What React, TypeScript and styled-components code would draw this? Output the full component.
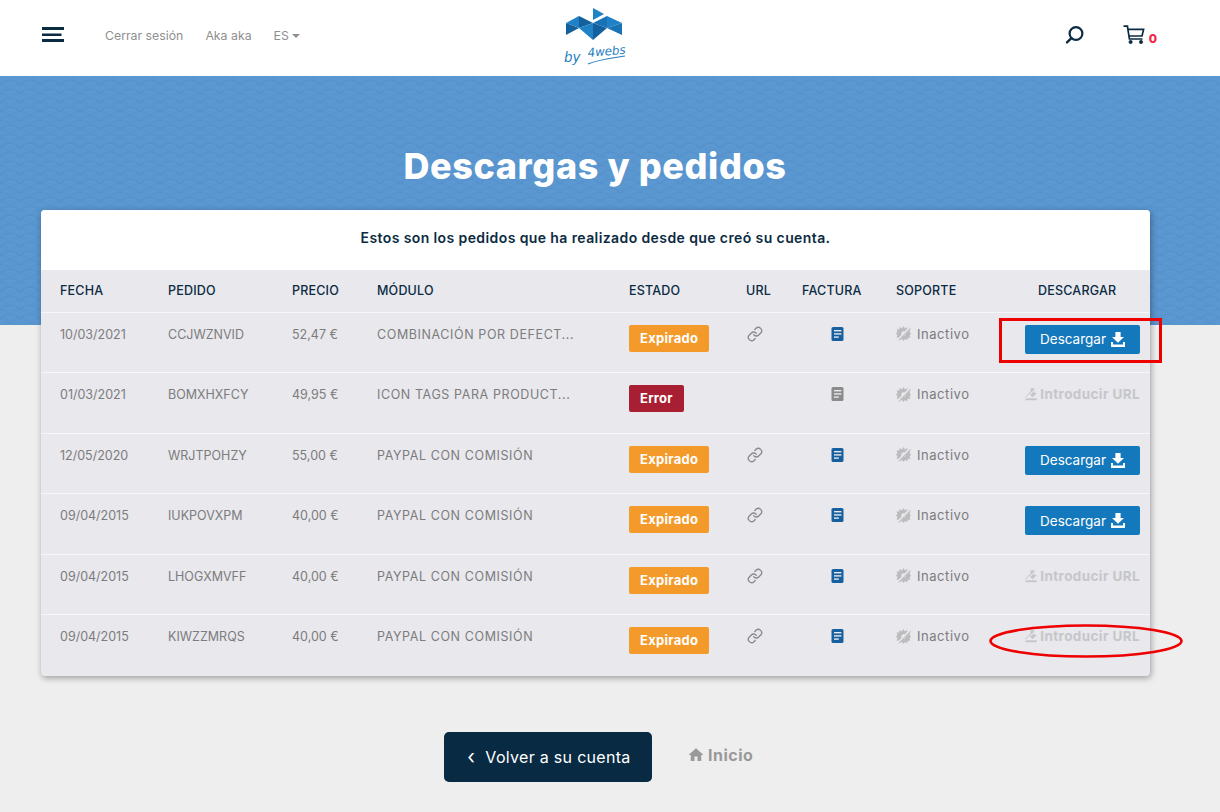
import React from 'react'
import styled, { createGlobalStyle } from 'styled-components'
import { Link as LinkIcon } from 'lucide-react'
import { MdHome } from 'react-icons/md'

const FONT = `Inter, "Open Sans", "Liberation Sans", sans-serif`

const GlobalStyle = createGlobalStyle`
  html, body {
    margin: 0;
    padding: 0;
    background: #eeeeee;
    font-family: ${FONT};
    overflow: hidden;
  }
  * {
    box-sizing: border-box;
  }
`

type Order = {
  date: string
  code: string
  price: string
  module: string
  status: 'Expirado' | 'Error'
  link: boolean
  action: 'download' | 'url'
}

const ORDERS: Order[] = [
  { date: '10/03/2021', code: 'CCJWZNVID', price: '52,47 €', module: 'COMBINACIÓN POR DEFECT...', status: 'Expirado', link: true, action: 'download' },
  { date: '01/03/2021', code: 'BOMXHXFCY', price: '49,95 €', module: 'ICON TAGS PARA PRODUCT...', status: 'Error', link: false, action: 'url' },
  { date: '12/05/2020', code: 'WRJTPOHZY', price: '55,00 €', module: 'PAYPAL CON COMISIÓN', status: 'Expirado', link: true, action: 'download' },
  { date: '09/04/2015', code: 'IUKPOVXPM', price: '40,00 €', module: 'PAYPAL CON COMISIÓN', status: 'Expirado', link: true, action: 'download' },
  { date: '09/04/2015', code: 'LHOGXMVFF', price: '40,00 €', module: 'PAYPAL CON COMISIÓN', status: 'Expirado', link: true, action: 'url' },
  { date: '09/04/2015', code: 'KIWZZMRQS', price: '40,00 €', module: 'PAYPAL CON COMISIÓN', status: 'Expirado', link: true, action: 'url' }
]

const COLUMNS = '108px 124px 85px 252px 117px 56px 94px 104px 1fr'

function Logo() {
  const light = '#1f82c7'
  const mid = '#1873b5'
  const dark = '#14609c'
  return (
    <svg width="66" height="68" viewBox="0 0 66 68">
      <polygon points="30,2 41,8 30,14" fill={light} />
      <polygon points="3,17 16,10 16,22" fill={light} />
      <polygon points="16,10 30,17 16,22" fill={dark} />
      <polygon points="3,17 3,29 16,22" fill={dark} />
      <polygon points="16,22 30,17 30,34" fill={light} />
      <polygon points="30,17 44,22 30,34" fill={dark} />
      <polygon points="30,17 44,10 44,22" fill={mid} />
      <polygon points="44,10 59,17 44,22" fill={light} />
      <polygon points="59,17 59,29 44,22" fill={mid} />
      <text x="1" y="56" fontFamily="'DejaVu Sans', sans-serif" fontStyle="italic" fontSize="13.5" fill="#2680bf">
        by
      </text>
      <text x="25" y="51" fontFamily="'DejaVu Sans', sans-serif" fontStyle="italic" fontSize="12" textLength="38" lengthAdjust="spacingAndGlyphs" fill="#2680bf" transform="rotate(-5 25 51)">
        4webs
      </text>
      <path d="M25 58 C37 53 50 52 62 50" stroke="#2680bf" strokeWidth="1.1" fill="none" />
    </svg>
  )
}

function MenuIcon() {
  return (
    <svg width="23" height="16" viewBox="0 0 23 16">
      <rect x="0" y="0" width="22" height="3" fill="#0b2b42" />
      <rect x="0" y="6.5" width="19.5" height="2.5" fill="#0b2b42" />
      <rect x="0" y="12" width="22" height="3" fill="#0b2b42" />
    </svg>
  )
}

function SearchIcon() {
  return (
    <svg width="20" height="20" viewBox="0 0 20 20" fill="none" stroke="#0b2b42">
      <circle cx="11" cy="8.5" r="6.4" strokeWidth="2.2" />
      <line x1="6.4" y1="13.2" x2="2" y2="17.4" strokeWidth="2.4" strokeLinecap="round" />
    </svg>
  )
}

function CartIcon() {
  return (
    <svg width="22" height="20" viewBox="0 0 22 20" fill="none" stroke="#0b2b42" strokeWidth="1.7">
      <path d="M0.5 1.2 H4.4 L6.4 14 H19.5" />
      <path d="M5 4.4 H20.6 L19 11 H6" />
      <circle cx="7.6" cy="17" r="1.7" fill="#0b2b42" strokeWidth="0.6" />
      <circle cx="18" cy="17" r="1.7" fill="#0b2b42" strokeWidth="0.6" />
    </svg>
  )
}

function InvoiceIcon({ active }: { active: boolean }) {
  const fill = active ? '#17609f' : '#8b8b8b'
  return (
    <svg width="13" height="14" viewBox="0 0 13 14">
      <rect x="0.5" y="0" width="12" height="14" rx="1.6" fill={fill} />
      <rect x="3" y="3" width="7.4" height="1.4" fill="#e8e8ed" />
      <rect x="3" y="6.2" width="7.4" height="1.4" fill="#e8e8ed" />
      <rect x="3" y="9.4" width="4.8" height="1.4" fill="#e8e8ed" />
    </svg>
  )
}

function SupportIcon() {
  return (
    <svg width="15" height="15" viewBox="0 0 15 15">
      <polygon
        points="7.5,0 9,2.4 11.3,1 11.8,3.6 14.4,3.4 13.6,6 15,7.5 13.6,9.2 14.4,11.7 11.8,11.7 11.2,14.2 9,13 7.5,15 6,13 3.7,14.2 3.2,11.7 0.6,11.7 1.4,9.2 0,7.5 1.4,6 0.6,3.4 3.2,3.6 3.7,1 6,2.4"
        fill="#bcbcbf"
      />
      <circle cx="7.5" cy="7.5" r="2.2" fill="#e8e8ed" />
      <line x1="1.5" y1="14.5" x2="14.5" y2="1" stroke="#e8e8ed" strokeWidth="2.4" />
      <line x1="2.5" y1="14.5" x2="14.5" y2="2.2" stroke="#bcbcbf" strokeWidth="1" />
    </svg>
  )
}

function DownloadIcon() {
  return (
    <svg width="14" height="15" viewBox="0 0 14 15" fill="#ffffff">
      <path d="M4.4 0 H9.6 V5 H13 L7 10.8 L1 5 H4.4 Z" />
      <path d="M0 10 H2 V12.6 H12 V10 H14 V15 H0 Z" />
    </svg>
  )
}

function UrlIcon() {
  return (
    <svg width="13" height="14" viewBox="0 0 13 14" fill="#c6c6c9">
      <path d="M6 1 H10 V6 H12.6 L8 10.4 L3.4 6 H6 Z" />
      <rect x="0.5" y="11.6" width="12" height="2" />
      <line x1="0.5" y1="11.6" x2="11" y2="2" stroke="#e8e8ed" strokeWidth="1.1" />
      <line x1="0.2" y1="10.4" x2="6.5" y2="4.6" stroke="#c6c6c9" strokeWidth="1" />
    </svg>
  )
}

export default function App() {
  return (
    <>
      <GlobalStyle />
      <Header>
        <HeaderLeft>
          <MenuIcon />
          <HeaderLinks>
            <HeaderLink>Cerrar sesión</HeaderLink>
            <HeaderLink>Aka aka</HeaderLink>
            <HeaderLink>
              ES <Caret />
            </HeaderLink>
          </HeaderLinks>
        </HeaderLeft>
        <LogoSlot>
          <Logo />
        </LogoSlot>
        <HeaderRight>
          <SearchIcon />
          <CartGroup>
            <CartIcon />
            <CartCount>0</CartCount>
          </CartGroup>
        </HeaderRight>
      </Header>
      <Hero>
        <h1>Descargas y pedidos</h1>
      </Hero>
      <Content>
        <Card>
          <Intro>Estos son los pedidos que ha realizado desde que creó su cuenta.</Intro>
          <HeadRow>
            <span>FECHA</span>
            <span>PEDIDO</span>
            <span>PRECIO</span>
            <span>MÓDULO</span>
            <span>ESTADO</span>
            <span>URL</span>
            <span>FACTURA</span>
            <span>SOPORTE</span>
            <HeadDownload>DESCARGAR</HeadDownload>
          </HeadRow>
          {ORDERS.map((order, index) => (
            <Row key={order.code}>
              <span>{order.date}</span>
              <span>{order.code}</span>
              <span>{order.price}</span>
              <ModuleName>{order.module}</ModuleName>
              <Badge $status={order.status}>{order.status}</Badge>
              <LinkCell>{order.link && <LinkIcon size={16} color="#8a8a8a" strokeWidth={2} />}</LinkCell>
              <InvoiceCell>
                <InvoiceIcon active={order.status !== 'Error'} />
              </InvoiceCell>
              <SupportCell>
                <SupportIcon />
                Inactivo
              </SupportCell>
              <ActionCell>
                {order.action === 'download' ? (
                  <DownloadButton>
                    Descargar
                    <DownloadIcon />
                  </DownloadButton>
                ) : (
                  <UrlLink>
                    <UrlIcon />
                    Introducir URL
                  </UrlLink>
                )}
                {index === 0 && <RedBox />}
                {index === 5 && (
                  <RedEllipse width="196" height="38" viewBox="0 0 196 38">
                    <ellipse cx="98" cy="19" rx="95.5" ry="15.5" fill="none" stroke="#ee0000" strokeWidth="2.6" />
                  </RedEllipse>
                )}
              </ActionCell>
            </Row>
          ))}
        </Card>
        <Footer>
          <BackButton>
            <span>‹</span>
            Volver a su cuenta
          </BackButton>
          <HomeLink>
            <MdHome size={18} />
            Inicio
          </HomeLink>
        </Footer>
      </Content>
    </>
  )
}

const Header = styled.header`
  height: 76px;
  background: #ffffff;
  padding: 0 63px 0 42px;

  display: grid;
  grid-template-columns: 521px 66px 1fr;
  align-items: center;
`

const HeaderLeft = styled.div`
  display: flex;
  align-items: center;
  height: 100%;
  padding-bottom: 6px;
`

const HeaderLinks = styled.nav`
  display: flex;
  gap: 22px;
  margin-left: 40px;
  padding-top: 1px;
`

const HeaderLink = styled.a`
  font-size: 12.3px;
  color: #8f8f8f;
  display: flex;
  align-items: center;
  gap: 3px;
`

const Caret = styled.i`
  width: 0;
  height: 0;
  border-left: 4px solid transparent;
  border-right: 4px solid transparent;
  border-top: 4px solid #8f8f8f;
`

const LogoSlot = styled.div`
  display: flex;
  align-self: start;
  padding-top: 6px;
`

const HeaderRight = styled.div`
  display: flex;
  justify-content: flex-end;
  align-items: center;
  gap: 38px;
  padding-bottom: 6px;
`

const CartGroup = styled.div`
  display: flex;
  align-items: center;
  gap: 4px;
`

const CartCount = styled.span`
  font-size: 12px;
  font-weight: 800;
  color: #f0264b;
  margin-top: 6px;
`

const Hero = styled.section`
  height: 249px;
  padding: 68px 30px 0 0;
  background-color: #5b97d0;
  background-image:
    radial-gradient(ellipse 11px 6px at 50% 100%, transparent 66%, rgba(62, 122, 184, 0.16) 70%, rgba(62, 122, 184, 0.16) 88%, transparent 92%),
    radial-gradient(ellipse 11px 6px at 50% 100%, transparent 66%, rgba(62, 122, 184, 0.1) 70%, rgba(62, 122, 184, 0.1) 88%, transparent 92%);
  background-size: 20px 9px;
  background-position: 0 0, 10px 4.5px;

  h1 {
    margin: 0;
    text-align: center;
    color: #ffffff;
    font-size: 36px;
    line-height: 44px;
    font-weight: 800;
    letter-spacing: 0.6px;
  }
`

const Content = styled.main`
  padding: 0 70px 0 41px;
`

const Card = styled.div`
  margin-top: -115px;
  padding-bottom: 1.5px;
  background: #e8e8ed;
  border-radius: 4px;
  box-shadow: 1px 2px 6px rgba(0, 0, 0, 0.35);
`

const Intro = styled.p`
  margin: 0;
  height: 60px;
  background: #ffffff;
  border-radius: 4px 4px 0 0;
  font-size: 14px;
  font-weight: 600;
  letter-spacing: 0.4px;
  color: #0b2b42;
  text-align: center;
  line-height: 56px;
`

const HeadRow = styled.div`
  height: 41.75px;
  padding: 0 0 0 19px;

  display: grid;
  grid-template-columns: ${COLUMNS};
  align-items: center;

  font-size: 12.5px;
  font-weight: 500;
  letter-spacing: 0.2px;
  color: #0b2b42;
`

const HeadDownload = styled.span`
  padding-left: 38px;
`

const Row = styled.div`
  height: 60.5px;
  padding: 13px 0 0 19px;
  border-top: 1px solid #f7f7f9;

  display: grid;
  grid-template-columns: ${COLUMNS};
  align-items: start;

  font-size: 12.5px;
  line-height: 18px;
  color: #7c7c7c;
`

const ModuleName = styled.span`
  letter-spacing: 0.6px;
  white-space: nowrap;
`

const Badge = styled.span<{ $status: string }>`
  justify-self: start;
  height: 27px;
  margin-top: -1px;
  padding: 0 11px;
  border-radius: 2px;
  background: ${p => (p.$status === 'Error' ? '#a81e32' : '#f49a2b')};
  color: #ffffff;
  font-size: 13px;
  font-weight: 700;
  letter-spacing: 0.28px;
  line-height: 27px;
`

const LinkCell = styled.div`
  display: flex;
  height: 18px;
  margin-top: -1px;
  align-items: center;
  padding-left: 1px;
`

const InvoiceCell = styled.div`
  display: flex;
  height: 18px;
  margin-top: -1px;
  align-items: center;
  padding-left: 29px;
`

const SupportCell = styled.div`
  display: flex;
  align-items: center;
  gap: 6px;
  margin-top: -1px;
  font-size: 13px;
  letter-spacing: 0.55px;
`

const ActionCell = styled.div`
  position: relative;
  display: flex;
  padding-left: 25px;
`

const DownloadButton = styled.button`
  width: 115px;
  height: 29px;
  margin-top: -1px;
  border: none;
  border-radius: 2px;
  background: #1478bd;
  color: #ffffff;
  font-family: ${FONT};
  font-size: 13.5px;

  display: flex;
  align-items: center;
  justify-content: center;
  gap: 5px;
`

const UrlLink = styled.a`
  width: 115px;
  margin-top: -1px;
  display: flex;
  align-items: center;
  gap: 3px;
  font-size: 13.5px;
  font-weight: 700;
  letter-spacing: 0.4px;
  color: #c6c6c9;
  white-space: nowrap;
`

const RedBox = styled.div`
  position: absolute;
  left: -1px;
  top: -8px;
  width: 163px;
  height: 45px;
  border: 3px solid #ee0000;
`

const RedEllipse = styled.svg`
  position: absolute;
  left: -12px;
  top: -6px;
`

const Footer = styled.div`
  margin-top: 56px;
  padding-left: 403px;

  display: flex;
  align-items: center;
  gap: 35px;
`

const BackButton = styled.a`
  width: 208px;
  height: 50px;
  padding-left: 2px;
  border-radius: 5px;
  background: #082a42;
  color: #ffffff;
  font-size: 16px;
  letter-spacing: 0.3px;

  display: flex;
  align-items: center;
  justify-content: center;
  gap: 10px;

  span {
    font-size: 20px;
    line-height: 20px;
  }
`

const HomeLink = styled.a`
  display: flex;
  align-items: center;
  gap: 3px;
  margin-top: -4px;
  font-size: 16px;
  font-weight: 700;
  letter-spacing: 0.5px;
  color: #999999;
`
